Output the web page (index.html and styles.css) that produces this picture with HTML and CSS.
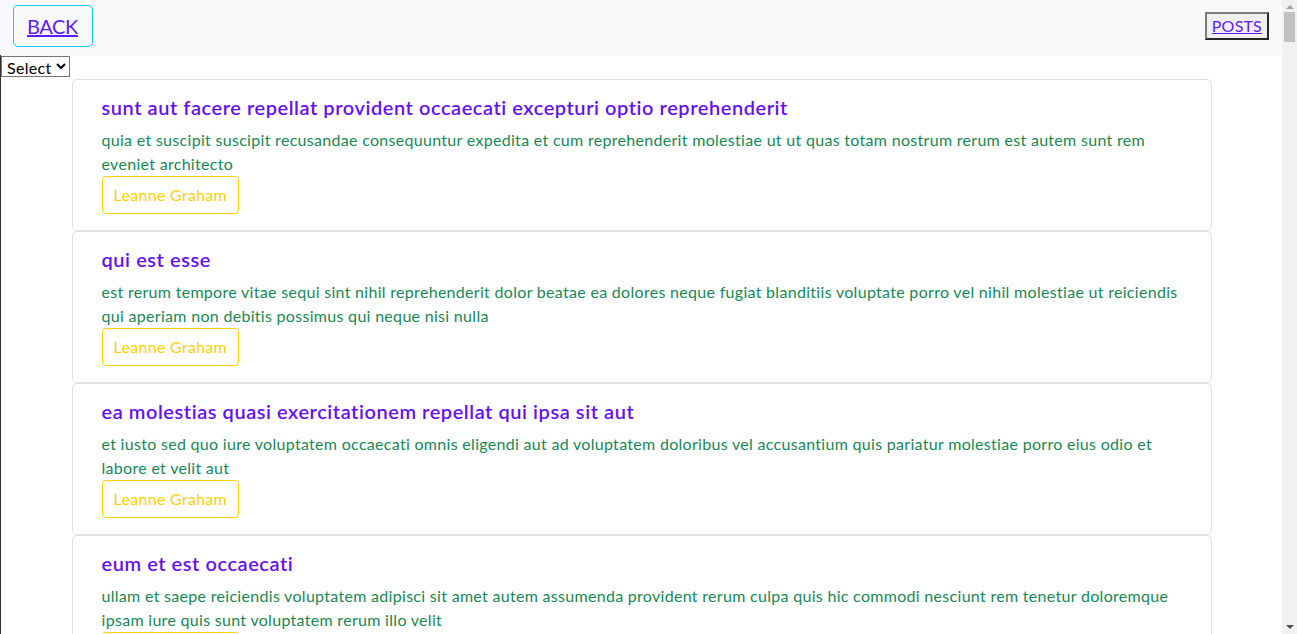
FILE: index.html
```html
<!DOCTYPE html>
<html lang="en">
<head>
<meta charset="utf-8">
<title>Posts</title>
<link rel="stylesheet" href="styles.css">
</head>
<body>
<nav class="navbar">
  <a class="btn-back" href="#">BACK</a>
  <button class="btn-posts"><a href="#">POSTS</a></button>
</nav>
<main class="page">
  <select class="filter">
    <option>Select</option>
  </select>
  <div class="container">
    <div class="card">
      <h5 class="card-title">sunt aut facere repellat provident occaecati excepturi optio reprehenderit</h5>
      <p class="card-text">quia et suscipit suscipit recusandae consequuntur expedita et cum reprehenderit molestiae ut ut quas totam nostrum rerum est autem sunt rem eveniet architecto</p>
      <button class="btn-author">Leanne Graham</button>
    </div>
    <div class="card">
      <h5 class="card-title">qui est esse</h5>
      <p class="card-text">est rerum tempore vitae sequi sint nihil reprehenderit dolor beatae ea dolores neque fugiat blanditiis voluptate porro vel nihil molestiae ut reiciendis qui aperiam non debitis possimus qui neque nisi nulla</p>
      <button class="btn-author">Leanne Graham</button>
    </div>
    <div class="card">
      <h5 class="card-title">ea molestias quasi exercitationem repellat qui ipsa sit aut</h5>
      <p class="card-text">et iusto sed quo iure voluptatem occaecati omnis eligendi aut ad voluptatem doloribus vel accusantium quis pariatur molestiae porro eius odio et labore et velit aut</p>
      <button class="btn-author">Leanne Graham</button>
    </div>
    <div class="card">
      <h5 class="card-title">eum et est occaecati</h5>
      <p class="card-text">ullam et saepe reiciendis voluptatem adipisci sit amet autem assumenda provident rerum culpa quis hic commodi nesciunt rem tenetur doloremque ipsam iure quis sunt voluptatem rerum illo velit</p>
      <button class="btn-author">Leanne Graham</button>
    </div>
    <div class="card">
      <h5 class="card-title">nesciunt quas odio</h5>
      <p class="card-text">repudiandae veniam quaerat sunt sed alias aut fugiat sit autem sed est voluptatem omnis possimus esse voluptatibus quis est aut tenetur dolor neque</p>
      <button class="btn-author">Leanne Graham</button>
    </div>
  </div>
</main>
<div class="scrollbar">
  <span class="arrow-up"></span>
  <span class="thumb"></span>
  <span class="arrow-down"></span>
</div>
</body>
</html>
```
FILE: styles.css
```css
* { box-sizing: border-box; }
html, body { margin: 0; padding: 0; }
body {
  font-family: Lato, "Noto Sans", sans-serif;
  font-size: 16px;
  line-height: 24px;
  color: #212529;
  background: #fff;
  margin-right: 15px;
}
.navbar {
  display: flex;
  justify-content: space-between;
  align-items: center;
  height: 55px;
  padding: 5px 13px 8px 13px;
  background: #f8f9fa;
}
.btn-back {
  display: inline-block;
  font-size: 20px;
  line-height: 24px;
  padding: 8px 14px 8px 13px;
  letter-spacing: -0.4px;
  border: 1px solid #0dcaf0;
  border-radius: 5px;
  color: #5b1cf5;
  text-decoration: underline;
}
.btn-posts {
  font-family: Lato, "Noto Sans", sans-serif;
  font-size: 16px;
  line-height: 20px;
  height: 28px;
  padding: 2px 5px;
  letter-spacing: 0.2px;
  background: #efefef;
  border: 2px solid;
  border-color: #7a7a7a #262626 #262626 #7a7a7a;
}
.btn-posts a { color: #5b1cf5; }
.page {
  border-left: 1px solid #333;
  padding-top: 1px;
  padding-bottom: 20px;
}
.filter {
  display: block;
  font-family: Lato, "Noto Sans", sans-serif;
  font-size: 16px;
  letter-spacing: 0.3px;
  height: 21px;
  margin: 0;
  padding: 0 1px;
  border: 1px solid #767676;
  border-radius: 0;
  background: #fff;
  color: #000;
}
.container {
  width: 1140px;
  margin: 2px auto 0 auto;
}
.card {
  border: 1px solid #dfdfdf;
  border-radius: 5px;
  padding: 15px 28px 16px 29px;
}
.card-title {
  margin: 0 0 9px 0;
  font-size: 20px;
  line-height: 24px;
  font-weight: 600;
  letter-spacing: 0.55px;
  color: #6610f2;
}
.card-text {
  margin: 0;
  letter-spacing: 0.3px;
  color: #198754;
}
.btn-author {
  font-family: Lato, "Noto Sans", sans-serif;
  font-size: 16px;
  line-height: 24px;
  padding: 6px 11px;
  letter-spacing: 0.3px;
  background: transparent;
  color: #ffd000;
  border: 1px solid #ffd000;
  border-radius: 4px;
}
.scrollbar {
  position: fixed;
  top: 0;
  right: 0;
  width: 15px;
  height: 100%;
  background: #f1f1f1;
}
.arrow-up {
  position: absolute;
  top: 5px;
  left: 4px;
  border-left: 4px solid transparent;
  border-right: 4px solid transparent;
  border-bottom: 4px solid #a3a3a3;
}
.thumb {
  position: absolute;
  top: 12px;
  left: 2px;
  width: 11px;
  height: 30px;
  background: #c1c1c1;
}
.arrow-down {
  position: absolute;
  bottom: 5px;
  left: 4px;
  border-left: 4px solid transparent;
  border-right: 4px solid transparent;
  border-top: 4px solid #505050;
}
```
